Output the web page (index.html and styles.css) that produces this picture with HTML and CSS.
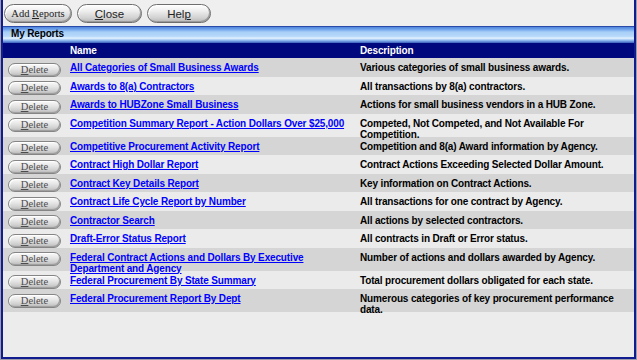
FILE: index.html
```html
<!DOCTYPE html>
<html lang="en">
<head>
<meta charset="utf-8">
<title>My Reports</title>
<link rel="stylesheet" href="styles.css">
</head>
<body>
<div class="window">
  <div class="toolbar">
    <button class="tbtn tbtn-add" type="button">Add <u>R</u>eports</button>
    <button class="tbtn tbtn-close" type="button"><u>C</u>lose</button>
    <button class="tbtn tbtn-help" type="button">Hel<u>p</u></button>
  </div>
  <div class="section-title">My Reports</div>
  <table class="reports">
    <colgroup>
      <col class="c-del">
      <col class="c-name">
      <col class="c-desc">
    </colgroup>
    <thead>
      <tr><th></th><th>Name</th><th>Description</th></tr>
    </thead>
    <tbody>
      <tr class="dark"><td class="cell-del"><button class="del" type="button"><u>D</u>elete</button></td><td><a class="txt" href="#">All Categories of Small Business Awards</a></td><td><p class="txt">Various categories of small business awards.</p></td></tr>
      <tr class="light"><td class="cell-del"><button class="del" type="button"><u>D</u>elete</button></td><td><a class="txt" href="#">Awards to 8(a) Contractors</a></td><td><p class="txt">All transactions by 8(a) contractors.</p></td></tr>
      <tr class="dark"><td class="cell-del"><button class="del" type="button"><u>D</u>elete</button></td><td><a class="txt" href="#">Awards to HUBZone Small Business</a></td><td><p class="txt">Actions for small business vendors in a HUB Zone.</p></td></tr>
      <tr class="light"><td class="cell-del"><button class="del" type="button"><u>D</u>elete</button></td><td><a class="txt" href="#">Competition Summary Report - Action Dollars Over $25,000</a></td><td><p class="txt">Competed, Not Competed, and Not Available For Competition.</p></td></tr>
      <tr class="dark"><td class="cell-del"><button class="del" type="button"><u>D</u>elete</button></td><td><a class="txt" href="#">Competitive Procurement Activity Report</a></td><td><p class="txt">Competition and 8(a) Award information by Agency.</p></td></tr>
      <tr class="light"><td class="cell-del"><button class="del" type="button"><u>D</u>elete</button></td><td><a class="txt" href="#">Contract High Dollar Report</a></td><td><p class="txt">Contract Actions Exceeding Selected Dollar Amount.</p></td></tr>
      <tr class="dark"><td class="cell-del"><button class="del" type="button"><u>D</u>elete</button></td><td><a class="txt" href="#">Contract Key Details Report</a></td><td><p class="txt">Key information on Contract Actions.</p></td></tr>
      <tr class="light"><td class="cell-del"><button class="del" type="button"><u>D</u>elete</button></td><td><a class="txt" href="#">Contract Life Cycle Report by Number</a></td><td><p class="txt">All transactions for one contract by Agency.</p></td></tr>
      <tr class="dark"><td class="cell-del"><button class="del" type="button"><u>D</u>elete</button></td><td><a class="txt" href="#">Contractor Search</a></td><td><p class="txt">All actions by selected contractors.</p></td></tr>
      <tr class="light"><td class="cell-del"><button class="del" type="button"><u>D</u>elete</button></td><td><a class="txt" href="#">Draft-Error Status Report</a></td><td><p class="txt">All contracts in Draft or Error status.</p></td></tr>
      <tr class="dark"><td class="cell-del"><button class="del" type="button"><u>D</u>elete</button></td><td><a class="txt" href="#">Federal Contract Actions and Dollars By Executive Department and Agency</a></td><td><p class="txt">Number of actions and dollars awarded by Agency.</p></td></tr>
      <tr class="light"><td class="cell-del"><button class="del" type="button"><u>D</u>elete</button></td><td><a class="txt" href="#">Federal Procurement By State Summary</a></td><td><p class="txt">Total procurement dollars obligated for each state.</p></td></tr>
      <tr class="dark"><td class="cell-del"><button class="del" type="button"><u>D</u>elete</button></td><td><a class="txt" href="#">Federal Procurement Report By Dept</a></td><td><p class="txt">Numerous categories of key procurement performance data.</p></td></tr>
    </tbody>
  </table>
</div>
</body>
</html>
```
FILE: styles.css
```css
html, body {
  margin: 0;
  padding: 0;
}
body {
  background: #9c9caa;
  width: 637px;
  height: 360px;
  overflow: hidden;
}
.window {
  box-sizing: border-box;
  width: 635px;
  height: 359px;
  margin-left: 1px;
  border: 2px solid #111c8e;
  border-top: none;
  background: #ececec;
  display: flex;
  flex-direction: column;
}
.toolbar {
  box-sizing: border-box;
  flex: none;
  height: 27px;
  padding: 4px 0 0 1px;
  display: flex;
  gap: 5px;
  align-items: flex-start;
  background: #efefef;
  border-bottom: 1px solid #2a4aa8;
}
.tbtn {
  box-sizing: border-box;
  height: 19px;
  padding: 0;
  border: 1px solid #6e6e6e;
  border-radius: 10px;
  background: linear-gradient(#ffffff 0%, #eeeeee 35%, #d2d2d2 75%, #b8b8b8 100%);
  box-shadow: inset -1px -1px 0 #9a9a9a, inset 1px 1px 0 #ffffff;
  color: #222;
  cursor: pointer;
}
.tbtn u { text-decoration: underline; }
.tbtn-add {
  width: 68px;
  font: 10.5px "Liberation Serif", serif;
}
.tbtn-close {
  width: 65px;
  font: 11.5px "Liberation Sans", sans-serif;
}
.tbtn-help {
  width: 64px;
  font: 11.5px "Liberation Sans", sans-serif;
}
.section-title {
  box-sizing: border-box;
  flex: none;
  height: 16px;
  padding-left: 8px;
  font: bold 10px "Liberation Sans", sans-serif;
  letter-spacing: -0.15px;
  line-height: 14px;
  color: #000;
  background: linear-gradient(#4f86dc 0%, #6fa2ea 14%, #a9d0f8 32%, #b6d8fa 58%, #e6f3ff 70%, #8cb8ee 84%, #3a5fbd 100%);
}
.reports {
  width: 100%;
  table-layout: fixed;
  border-collapse: collapse;
  border-spacing: 0;
  font: bold 10px "Liberation Sans", sans-serif;
  letter-spacing: -0.15px;
  color: #000;
}
.c-del { width: 67px; }
.c-name { width: 290px; }
.c-desc { width: auto; }
.reports thead tr {
  background: #00087e;
}
.reports th {
  height: 15px;
  padding: 0;
  text-align: left;
  color: #fff;
  font-weight: bold;
  line-height: 15px;
}
.reports td {
  padding: 4px 14px 0 0;
  line-height: 11px;
  vertical-align: top;
}
.reports td:last-child {
  padding-right: 6px;
}
.reports .txt {
  display: block;
  margin: 0 0 -3px;
}
.reports td.cell-del {
  padding: 4.5px 0 0 5px;
  line-height: 0;
}
.reports tr.dark { background: #d5d5d5; }
.reports tr.light { background: #ebebeb; }
.reports a {
  color: #0000ff;
  text-decoration: underline;
}
.del {
  box-sizing: border-box;
  display: block;
  width: 53px;
  height: 14px;
  padding: 0;
  border: 1px solid #858585;
  border-radius: 7px;
  background: linear-gradient(#fafafa 0%, #e6e6e6 40%, #d0d0d0 75%, #b4b4b4 100%);
  box-shadow: inset -1px -1px 0 #a0a0a0, inset 1px 1px 0 #ffffff;
  font: 10.5px "Liberation Serif", serif;
  line-height: 12px;
  color: #4c4c4c;
  cursor: pointer;
}
```
